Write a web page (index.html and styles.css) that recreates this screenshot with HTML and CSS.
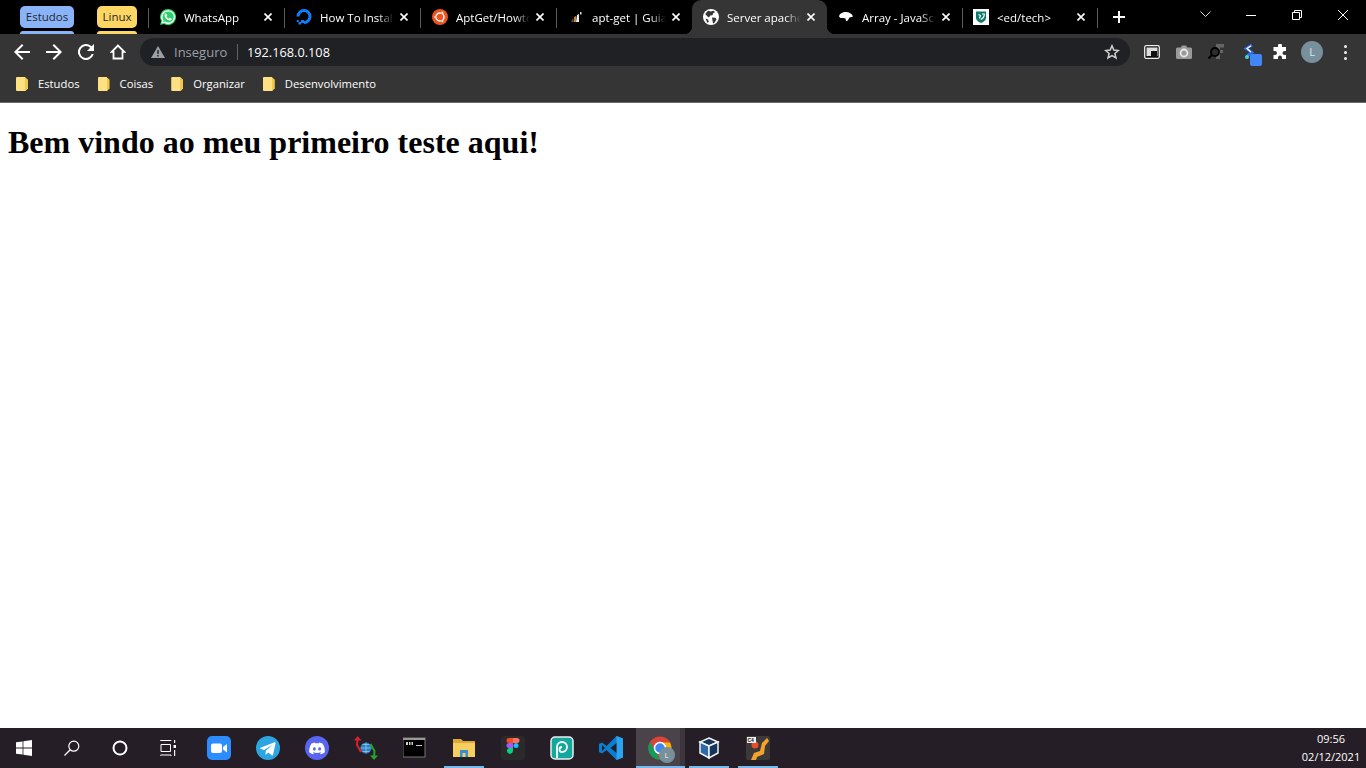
FILE: index.html
```html
<!DOCTYPE html>
<html lang="en">

<head>
    <meta charset="UTF-8">
    <meta name="viewport" content="width=device-width, initial-scale=1.0">
    <title>Server apache</title>
    <link rel="stylesheet" href="styles.css">
</head>

<body>
    <!-- Tab strip -->
    <div class="tabstrip">
        <div class="group group-blue"><span class="chip">Estudos</span><span class="underline"></span></div>
        <div class="group group-yellow"><span class="chip">Linux</span><span class="underline"></span></div>

        <div class="tab">
            <svg class="favicon" viewBox="0 0 16 16"><path fill="#25d366" d="M8 0a8 8 0 0 0-6.8 12.1L0 16l4-1.1A8 8 0 1 0 8 0z"/><path fill="none" stroke="#fff" stroke-width="1.3" d="M8 1.8a6.2 6.2 0 0 0-5.2 9.5l-.6 2.4 2.5-.6A6.2 6.2 0 1 0 8 1.8z"/><path fill="#fff" d="M5.7 4.4c-.4 0-1.2.6-1.2 1.8 0 2.400 2.800 5.300 5.500 5.300 1.200 0 1.700-1 1.700-1.500 0-.4-1.500-1.200-1.800-1.200-.3 0-.6.800-.9.800-.7 0-2.300-1.500-2.300-2.200 0-.3.600-.6.600-1 0-.3-.7-2-1.600-2z"/></svg>
            <span class="title">WhatsApp</span>
            <svg class="close" viewBox="0 0 10 10"><path stroke="#fff" stroke-width="2" d="M.6.6l8.800 8.800M9.400.6L.6 9.400"/></svg>
        </div>
        <div class="tab">
            <svg class="favicon" viewBox="0 0 16 16"><path fill="none" stroke="#0a80ff" stroke-width="3" d="M8 13.500A6 6 0 1 0 2 7.500"/><path fill="#0a80ff" d="M5 11h3v3H5zM2.500 13H5v2.500H2.500zM.8 11h2v2h-2z"/></svg>
            <span class="title">How To Install</span>
            <svg class="close" viewBox="0 0 10 10"><path stroke="#fff" stroke-width="2" d="M.6.6l8.800 8.800M9.400.6L.6 9.400"/></svg>
        </div>
        <div class="tab">
            <svg class="favicon" viewBox="0 0 16 16"><circle cx="8" cy="8" r="8" fill="#e95420"/><circle cx="8" cy="8" r="4" fill="none" stroke="#fff" stroke-width="1.500"/><circle cx="3.300" cy="8" r="1.300" fill="#fff" stroke="#e95420" stroke-width=".5"/><circle cx="10.400" cy="3.900" r="1.300" fill="#fff" stroke="#e95420" stroke-width=".5"/><circle cx="10.400" cy="12.100" r="1.300" fill="#fff" stroke="#e95420" stroke-width=".5"/></svg>
            <span class="title">AptGet/Howto</span>
            <svg class="close" viewBox="0 0 10 10"><path stroke="#fff" stroke-width="2" d="M.6.6l8.800 8.800M9.400.6L.6 9.400"/></svg>
        </div>
        <div class="tab">
            <svg class="favicon" viewBox="0 0 16 16"><path fill="#5a4a3a" d="M3 13l2-4 1 4z"/><path fill="#c9803a" d="M6 13V8l2-1v6z"/><path fill="#eee" d="M8 13l1-7 2-1 0 8z"/><path fill="#ddd" d="M12 3h1.500v2.500H12z"/></svg>
            <span class="title">apt-get | Guia</span>
            <svg class="close" viewBox="0 0 10 10"><path stroke="#fff" stroke-width="2" d="M.6.6l8.800 8.800M9.400.6L.6 9.400"/></svg>
        </div>
        <div class="tab tab-narrow active">
            <svg class="favicon" viewBox="0 0 16 16"><circle cx="8" cy="8" r="8" fill="#fff"/><path fill="#353535" d="M5 1.800l3 .7 2.500-.8 1.500 1.300-2 1.500-.5 1.800-2.300.3-1.200 1.800-1.500-1L2.200 5zM9 8.500l3.500.3 1 1.500-2 3.500-1.500.8-.5-3zM2.500 9.500l2.500 1 .8 2.500-1.500.8z"/></svg>
            <span class="title">Server apache</span>
            <svg class="close" viewBox="0 0 10 10"><path stroke="#fff" stroke-width="2" d="M.6.6l8.800 8.800M9.400.6L.6 9.400"/></svg>
        </div>
        <div class="tab tab-narrow no-sep">
            <svg class="favicon" viewBox="0 0 16 16"><path fill="#fff" d="M1 7.500C1.500 4.500 4.500 3 8 3c3 0 6 1.500 7 4.500l-1.500.5-2 .5-.8 1.500-1.500 2-1.200 0-.5-2.500L5 9 2.500 9z"/></svg>
            <span class="title">Array - JavaScript</span>
            <svg class="close" viewBox="0 0 10 10"><path stroke="#fff" stroke-width="2" d="M.6.6l8.800 8.800M9.400.6L.6 9.400"/></svg>
        </div>
        <div class="tab tab-narrow">
            <svg class="favicon" viewBox="0 0 16 16"><path fill="#fff" d="M0 0h16v16H0z"/><path fill="#0f7a6a" d="M3 2.500h10v6c0 3-2.500 4.500-5 5.500-2.500-1-5-2.500-5-5.500z"/><path fill="none" stroke="#fff" stroke-width="1.200" d="M5.500 5.500l2 1-1 3M9 5h2.300c0 3-1.300 4.500-3.500 5.500"/></svg>
            <span class="title">&lt;ed/tech&gt;</span>
            <svg class="close" viewBox="0 0 10 10"><path stroke="#fff" stroke-width="2" d="M.6.6l8.800 8.800M9.400.6L.6 9.400"/></svg>
        </div>

        <div class="tab-end"></div>
        <svg class="newtab" viewBox="0 0 12 12"><path stroke="#fff" stroke-width="2" d="M6 0v12M0 6h12"/></svg>

        <svg class="win-chevron" viewBox="0 0 11 6"><path fill="none" stroke="#ddd" d="M.5.500l5 5 5-5"/></svg>
        <div class="win-controls">
            <div class="win-btn"><svg class="win-icon" viewBox="0 0 10 10"><path stroke="#fff" d="M0 5.500h10"/></svg></div>
            <div class="win-btn"><svg class="win-icon" viewBox="0 0 10 10"><path fill="none" stroke="#fff" d="M.5 2.500h7v7h-7zM2.500 2.500v-2h7v7h-2"/></svg></div>
            <div class="win-btn"><svg class="win-icon" viewBox="0 0 10 10"><path stroke="#fff" d="M0 0l10 10M10 0L0 10"/></svg></div>
        </div>
    </div>

    <!-- Address bar -->
    <div class="toolbar">
        <svg class="nav-icon" viewBox="0 0 16 16"><path fill="#fff" d="M16 7H3.800l5.600-5.600L8 0 0 8l8 8 1.400-1.400L3.800 9H16z"/></svg>
        <svg class="nav-icon" viewBox="0 0 16 16"><path fill="#fff" d="M0 7h12.200L6.600 1.400 8 0l8 8-8 8-1.400-1.400L12.200 9H0z"/></svg>
        <svg class="nav-icon" viewBox="0 0 16 16"><path fill="#fff" d="M13.650 2.350A8 8 0 1 0 15.730 10h-2.080a6 6 0 1 1-1.410-6.240L9 7h7V0z"/></svg>
        <svg class="nav-icon" viewBox="0 0 16 16"><path fill="none" stroke="#fff" stroke-width="1.800" d="M8 1.500L1.800 7.800h1.700v6.700h9V7.800h1.700z"/></svg>

        <div class="omnibox">
            <svg class="warn" viewBox="0 0 14 12"><path fill="#9aa0a6" d="M7 0l7 12H0z"/><path fill="#202124" d="M6.300 4h1.400v4H6.300zM6.300 9h1.400v1.400H6.300z"/></svg>
            <span class="insecure">Inseguro</span>
            <span class="url">192.168.0.108</span>
            <svg class="star" viewBox="0 0 16 16"><path fill="none" stroke="#d0d0d0" stroke-width="1.500" d="M8 1.800l1.800 4.300 4.600.4-3.500 3 1.100 4.500L8 11.600 4 14l1.100-4.500-3.500-3 4.600-.4z"/></svg>
        </div>

        <div class="ext-row">
            <span class="ext">
                <svg class="ext-icon" viewBox="0 0 16 14"><rect x=".7" y=".7" width="14.600" height="12.600" rx="1.500" fill="#111" stroke="#eee" stroke-width="1.300"/><path fill="#ddd" d="M2.500 2.500h11V11h-11z"/><path fill="#111" d="M7 6h6v5H7z"/></svg>
            </span>
            <span class="ext">
                <svg class="ext-icon" viewBox="0 0 16 14"><path fill="#9a9a9a" d="M1.500 2.500h3L6 .5h4l1.500 2h3A1.500 1.500 0 0 1 16 4v8.500a1.500 1.500 0 0 1-1.500 1.500h-13A1.500 1.500 0 0 1 0 12.500V4a1.500 1.500 0 0 1 1.500-1.500z"/><circle cx="8" cy="8" r="3.500" fill="none" stroke="#e8e8e8" stroke-width="1.800"/></svg>
            </span>
            <span class="ext">
                <svg class="ext-icon" viewBox="0 0 16 16"><path fill="#666" d="M8 0h8v3.500h-4V6h3v3h-3v6H8z"/><circle cx="7" cy="8" r="4" fill="#2c2c2c" stroke="#000" stroke-width="1.800"/><path stroke="#000" stroke-width="2.200" d="M4 11l-3.500 3.500"/></svg>
            </span>
            <span class="ext ext-badged">
                <svg class="ext-icon" viewBox="0 0 16 16"><path fill="none" stroke="#2b6cf0" stroke-width="2.800" d="M12 1L6 4.500 12 8.500 7 12"/><path fill="none" stroke="#fff" stroke-width="1.300" d="M11 1.800L7 4.500 11 8"/><circle cx="7" cy="13" r="2" fill="#3ddbd0"/></svg>
                <span class="ext-badge"></span>
            </span>
            <span class="ext">
                <svg class="ext-icon" viewBox="0 0 16 16"><path fill="#fff" d="M6 1.500a2 2 0 0 1 4 0V3h4v4h-1.500a2 2 0 0 0 0 4H14v4H10v-1.500a2 2 0 0 0-4 0V15H1.500v-4H3a2 2 0 0 0 0-4H1.500V3H6z"/></svg>
            </span>
            <span class="avatar">L</span>
            <span class="menu-dots"><i></i><i></i><i></i></span>
        </div>
    </div>

    <!-- Bookmarks -->
    <div class="bookmarks">
        <div class="bookmark"><span class="folder"></span>Estudos</div>
        <div class="bookmark"><span class="folder"></span>Coisas</div>
        <div class="bookmark"><span class="folder"></span>Organizar</div>
        <div class="bookmark"><span class="folder"></span>Desenvolvimento</div>
    </div>

    <!-- Page content -->
    <main class="page">
        <h1>Bem vindo ao meu primeiro teste aqui!</h1>
    </main>

    <!-- Windows taskbar -->
    <footer class="taskbar">
        <div class="sys-btn">
            <svg class="sys-icon" viewBox="0 0 16 16"><path fill="#fff" d="M0 2.300l6.600-.9v6.200H0zM7.400 1.300L16 0v7.600H7.400zM0 8.400h6.600v6.200L0 13.700zM7.400 8.400H16V16l-8.600-1.300z"/></svg>
        </div>
        <div class="sys-btn">
            <svg class="sys-icon" viewBox="0 0 16 16"><circle cx="9.800" cy="6.200" r="5" fill="none" stroke="#fff" stroke-width="1.200"/><path stroke="#fff" stroke-width="1.300" d="M6.200 9.800L.5 15.500"/></svg>
        </div>
        <div class="sys-btn">
            <svg class="sys-icon" viewBox="0 0 16 16"><circle cx="8" cy="8" r="6.500" fill="none" stroke="#fff" stroke-width="2"/></svg>
        </div>
        <div class="sys-btn">
            <svg class="sys-icon" viewBox="0 0 16 16"><path fill="none" stroke="#fff" d="M.5 0v.5H11V0M.5 15.500V15H11v1M1 4.500h9.500v7H1z"/><path fill="#fff" d="M14 0h1.200v3H14zM13.500 5H16v3h-2.500zM14 10h1.200v6H14z"/></svg>
        </div>

        <div class="app">
            <svg class="app-icon" viewBox="0 0 24 24"><rect width="24" height="24" rx="5" fill="#2d8cff"/><rect x="4" y="7.500" width="11" height="9.500" rx="2" fill="#fff"/><path fill="#fff" d="M16 11l4-3v8.500l-4-3z"/></svg>
        </div>
        <div class="app">
            <svg class="app-icon" viewBox="0 0 24 24"><circle cx="12" cy="12" r="12" fill="#2ca5e0"/><path fill="#fff" d="M4.500 11.700l14-5.400c.7-.2 1.200.2 1 1.100l-2.400 11.200c-.2.800-.6 1-1.300.6l-3.600-2.700-1.800 1.700c-.3.300-.5.400-.9.300l.3-3.700 6.700-6-8.300 5.200-3.500-1.200c-.8-.2-.8-.8-.2-1.100z"/></svg>
        </div>
        <div class="app">
            <svg class="app-icon" viewBox="0 0 24 24"><circle cx="12" cy="12" r="12" fill="#5865f2"/><path fill="#fff" d="M17.500 7.500A13 13 0 0 0 14.300 6.500l-.4.800a12 12 0 0 0-3.800 0l-.4-.8a13 13 0 0 0-3.200 1C4.500 10.500 4 13.400 4.200 16.200a13 13 0 0 0 4 2l.8-1.300-1.300-.6.300-.3a9 9 0 0 0 8 0l.3.300-1.300.6.800 1.300a13 13 0 0 0 4-2c.3-3.300-.5-6.200-2.300-8.700zM9.400 14.500c-.8 0-1.400-.7-1.400-1.600s.6-1.600 1.400-1.600 1.400.7 1.400 1.600-.6 1.600-1.400 1.600zm5.200 0c-.8 0-1.400-.7-1.400-1.600s.6-1.600 1.400-1.600 1.400.7 1.400 1.600-.6 1.600-1.400 1.600z"/></svg>
        </div>
        <div class="app">
            <svg class="app-icon" viewBox="0 0 24 24"><circle cx="12" cy="12" r="5.500" fill="#2b7fc4"/><path fill="none" stroke="#9bd0f0" stroke-width=".7" d="M6.500 12h11M12 6.500v11M8.500 8.500h7M8.500 15.500h7"/><path fill="none" stroke="#d8232a" stroke-width="2" d="M3.500 3L3 9l4 7"/><path fill="#d8232a" d="M3.500 0l4 4.500H0z"/><path fill="none" stroke="#27a52a" stroke-width="2" d="M20 21l.5-6-4-7"/><path fill="#27a52a" d="M20 24l-4-4.500h8z"/></svg>
        </div>
        <div class="app">
            <svg class="app-icon" viewBox="0 0 24 24"><rect y="2" width="22" height="19" fill="#000" stroke="#777"/><path fill="#999" d="M0 2h22v2H0z"/><path fill="#ccc" d="M3 6h2v3H3zM6 6h1.500v3H6zM8.500 6h1.500v3H8.500zM13 9h6v1h-6z"/></svg>
        </div>
        <div class="app running">
            <svg class="app-icon" viewBox="0 0 24 24"><path fill="#d9a93a" d="M1 3h8l2 2h12v4H1z"/><path fill="#f6cf5f" d="M1 7h22v14H1z"/><path fill="#2f8fd8" d="M8 14h8v7h-2.500v-4h-3v4H8z"/></svg>
        </div>
        <div class="app">
            <svg class="app-icon" viewBox="0 0 24 24"><rect width="24" height="24" rx="3" fill="#2a2a2a"/><path fill="#f24e1e" d="M8 2h4v5H8a2.500 2.500 0 0 1 0-5z"/><path fill="#ff7262" d="M12 2h4a2.500 2.500 0 0 1 0 5h-4z"/><path fill="#a259ff" d="M8 7h4v5H8a2.500 2.500 0 0 1 0-5z"/><circle cx="15" cy="9.500" r="2.500" fill="#1abcfe"/><path fill="#0acf83" d="M8 12h4v3a3 3 0 1 1-4-3z"/></svg>
        </div>
        <div class="app">
            <svg class="app-icon" viewBox="0 0 24 24"><rect x="1" y="1" width="22" height="22" rx="4" fill="#13a89e" stroke="#eee" stroke-width="1.500"/><path fill="none" stroke="#fff" stroke-width="1.800" d="M7 22V11a5 5 0 1 1 5 5 2.500 2.500 0 0 1 0-5"/></svg>
        </div>
        <div class="app">
            <svg class="app-icon" viewBox="0 0 24 24"><path fill="#0a7fd0" d="M17.500 0L7.500 10 3 6.500 0 8v8l3 1.500 4.500-3.500 10 10 6.500-2.500V2.500z"/><path fill="#2ba3f0" d="M17.500 0L24 2.500v19L17.500 24z"/><path fill="#261e26" d="M17.500 7l-6 5 6 5zM3 9v6l3-3z"/></svg>
        </div>
        <div class="app active">
            <svg class="app-icon" viewBox="0 0 24 24"><circle cx="12" cy="12" r="11.500" fill="#db4437"/><path fill="#0f9d58" d="M12 23.500A11.500 11.500 0 0 1 2 6l6 10z"/><path fill="#f4b400" d="M12 6.500h10a11.500 11.500 0 0 1-10 17l5-8.500z"/><circle cx="12" cy="12" r="5.500" fill="#4285f4" stroke="#fff" stroke-width="1.500"/></svg>
            <span class="app-avatar">L</span>
        </div>
        <div class="app running">
            <svg class="app-icon" viewBox="0 0 24 24"><path fill="#183a61" d="M12 2l9 4v11l-9 5-9-5V6z"/><path fill="#16355a" d="M12 2l9 4-9 4-9-4z" stroke="#eef3f8" stroke-width="1.500"/><path fill="#2f6aa8" d="M3 6l9 4v12l-9-5z" stroke="#eef3f8" stroke-width="1.500"/><path fill="#16355a" d="M21 6l-9 4v12l9-5z" stroke="#eef3f8" stroke-width="1.500"/></svg>
        </div>
        <div class="app running">
            <svg class="app-icon" viewBox="0 0 24 24"><rect width="24" height="24" rx="2" fill="#3c3a38"/><path fill="#f6a32c" d="M5 24l3-7 6-2 2-8 5-5 2 3-4 5-1 8-7 3-1 3z"/><circle cx="9" cy="9" r="3.500" fill="#e4502a"/><rect x="1" y="1" width="9" height="6" fill="#f2f2f2"/><text class="c4-label" x="1.500" y="6">C4</text></svg>
        </div>

        <div class="clock">
            <span>09:56</span>
            <span>02/12/2021</span>
        </div>
    </footer>
</body>

</html>
```

FILE: styles.css
```css
/* Body styling */
body {
    margin: 0;
    height: 768px;
    display: flex;
    flex-direction: column;
    overflow: hidden;
    background: #fff;
    font-family: "Open Sans", "Noto Sans", sans-serif;
}

svg {
    flex: none;
    display: block;
}

/* Tab strip */
.tabstrip {
    height: 34px;
    display: flex;
    align-items: flex-start;
    padding-left: 20px;
    background: #000;
    color: #fff;
}

.group {
    width: 54px;
    display: flex;
    flex-direction: column;
    margin-right: 23px;
}

.group-yellow {
    width: 40px;
    margin-right: 11px;
}

.chip {
    margin-top: 6px;
    height: 22px;
    line-height: 22px;
    text-align: center;
    border-radius: 5px;
    font-size: 11.5px;
    color: #26282c;
}

.underline {
    margin-top: 3px;
    height: 3px;
    border-radius: 3px 3px 0 0;
}

.group-blue .chip,
.group-blue .underline {
    background: #8ab4f8;
}

.group-yellow .chip,
.group-yellow .underline {
    background: #fdd663;
}

.tab {
    position: relative;
    flex: none;
    box-sizing: border-box;
    width: 136px;
    height: 34px;
    display: flex;
    align-items: center;
    padding-left: 12px;
    background: linear-gradient(#5c5c5c, #5c5c5c) left 8px / 1px 20px no-repeat;
}

.tab-narrow {
    width: 135px;
    padding-left: 11px;
}

.tab.no-sep {
    background: none;
}

/* Selected tab joins the toolbar */
.tab.active {
    background: #353535;
    border-radius: 9px 9px 0 0;
}

.tab.active::before,
.tab.active::after {
    content: "";
    position: absolute;
    bottom: 0;
    width: 8px;
    height: 8px;
}

.tab.active::before {
    left: -8px;
    background: radial-gradient(circle at 0 0, #000 8px, #353535 8.5px);
}

.tab.active::after {
    right: -8px;
    background: radial-gradient(circle at 100% 0, #000 8px, #353535 8.5px);
}

.favicon {
    width: 16px;
    height: 16px;
    margin-right: 8px;
}

.title {
    width: 74px;
    overflow: hidden;
    white-space: nowrap;
    font-size: 11.5px;
    -webkit-mask-image: linear-gradient(to right, #000 58px, transparent 74px);
    mask-image: linear-gradient(to right, #000 58px, transparent 74px);
}

.close {
    margin-left: 6px;
    width: 8px;
    height: 8px;
}

.tab-end {
    width: 1px;
    height: 20px;
    margin-top: 8px;
    background: #5c5c5c;
}

.newtab {
    width: 12px;
    height: 12px;
    margin: 11px 0 0 15px;
}

.win-chevron {
    width: 11px;
    height: 6px;
    margin: 11px 0 0 75px;
}

.win-controls {
    display: flex;
    margin-left: 17px;
}

.win-btn {
    width: 46px;
    height: 29px;
    display: flex;
    align-items: center;
    justify-content: center;
}

.win-icon {
    width: 10px;
    height: 10px;
}

/* Toolbar */
.toolbar {
    height: 36px;
    display: flex;
    align-items: center;
    gap: 16px;
    padding-left: 14px;
    background: #353535;
}

.nav-icon {
    width: 16px;
    height: 16px;
}

.omnibox {
    width: 990px;
    height: 28px;
    margin-left: -2px;
    box-sizing: border-box;
    display: flex;
    align-items: center;
    padding: 0 10px 0 11px;
    border-radius: 14px;
    background: #202124;
    font-size: 13px;
}

.warn {
    width: 14px;
    height: 12px;
    margin-right: 9px;
}

.insecure {
    width: 63px;
    color: #9aa0a6;
    border-right: 1px solid #5f6368;
    line-height: 16px;
}

.url {
    margin-left: 9px;
    color: #fff;
    font-size: 12.75px;
    flex: 1;
}

.star {
    width: 16px;
    height: 16px;
}

.ext-row {
    display: flex;
    align-items: center;
    margin-left: -10px;
}

.ext {
    position: relative;
    width: 32px;
    display: flex;
    justify-content: center;
}

.ext-icon {
    width: 16px;
    height: 16px;
}

/* Blue square over the extension icon */
.ext-badge {
    position: absolute;
    left: 18px;
    top: 10px;
    width: 12px;
    height: 12px;
    border-radius: 2px;
    background: #4285f4;
}

.avatar {
    width: 22px;
    height: 22px;
    margin-left: 5px;
    border-radius: 50%;
    background: #78909c;
    color: #dfe6ea;
    font-size: 11px;
    line-height: 22px;
    text-align: center;
}

.menu-dots {
    display: flex;
    flex-direction: column;
    gap: 3px;
    margin-left: 21px;
}

.menu-dots i {
    width: 3px;
    height: 3px;
    border-radius: 50%;
    background: #eee;
}

/* Bookmarks bar */
.bookmarks {
    box-sizing: border-box;
    height: 33px;
    display: flex;
    align-items: center;
    gap: 18px;
    padding: 0 0 6px 16px;
    background: #353535;
    border-bottom: 1px solid #6a6a6a;
    color: #fff;
    font-size: 11.25px;
}

.bookmark {
    display: flex;
    align-items: center;
    gap: 10px;
}

.folder {
    width: 12px;
    height: 14px;
    margin-top: 2px;
    border-radius: 1px;
    background: linear-gradient(to right, #ffe082 75%, #f4c64a 75%);
    clip-path: polygon(0 0, 75% 0, 100% 20%, 100% 80%, 80% 100%, 0 100%);
}

/* Page */
.page {
    flex: 1;
    padding: 0 8px;
    color: #000;
}

h1 {
    font-family: "Liberation Serif", serif;
}

/* Taskbar */
.taskbar {
    height: 40px;
    display: flex;
    background: #261e26;
}

.sys-btn {
    width: 48px;
    height: 40px;
    display: flex;
    align-items: center;
    justify-content: center;
}

.sys-icon {
    width: 16px;
    height: 16px;
}

.app {
    position: relative;
    flex: none;
    width: 49px;
    height: 40px;
    display: flex;
    align-items: center;
    justify-content: center;
}

.app:nth-child(5) {
    margin-left: 2.5px;
}

.app-icon {
    width: 24px;
    height: 24px;
}

/* Blue line under running apps */
.app.running::after,
.app.active::after {
    content: "";
    position: absolute;
    bottom: 0;
    left: 4.5px;
    width: 40px;
    height: 2px;
    background: #76b9ed;
}

.app.active {
    background: linear-gradient(to right, #4a444a 44px, #3c353c 44px);
}

.app.active::after {
    left: 0;
    width: 49px;
}

.app-avatar {
    position: absolute;
    left: 23px;
    top: 19px;
    width: 16px;
    height: 16px;
    border-radius: 50%;
    background: #78909c;
    color: #e6ecef;
    font-size: 8px;
    line-height: 16px;
    text-align: center;
}

.c4-label {
    font-family: "Liberation Sans", sans-serif;
    font-size: 5px;
    font-weight: bold;
    fill: #111;
}

.clock {
    margin-left: auto;
    width: 70px;
    box-sizing: border-box;
    padding-bottom: 2px;
    display: flex;
    flex-direction: column;
    align-items: center;
    justify-content: center;
    gap: 3px;
    color: #fff;
    font-size: 11px;
}
```
